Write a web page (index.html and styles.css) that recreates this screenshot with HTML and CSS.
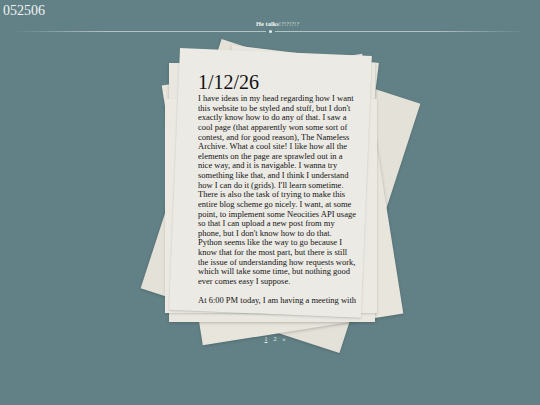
FILE: index.html
```html
<!DOCTYPE html>
<html lang="en">
<head>
<meta charset="utf-8">
<title>052506</title>
<link rel="stylesheet" href="styles.css">
</head>
<body>
<header class="top">
  <div class="site-id">052506</div>
  <div class="tagline"><b>He talks</b><span>!?!?!?!?</span></div>
  <div class="rule"><span class="dot"></span></div>
</header>
<main class="stage">
  <div class="stack">
    <div class="sheet sheet-cw"></div>
    <div class="sheet sheet-ccw"></div>
    <div class="sheet sheet-tilt"></div>
    <div class="sheet sheet-back"></div>
    <div class="sheet sheet-mid"></div>
    <div class="sheet sheet-front"></div>
    <article class="post">
      <h1 class="post-title">1/12/26</h1>
      <p>I have ideas in my head regarding how I want this website to be styled and stuff, but I don't exactly know how to do any of that. I saw a cool page (that apparently won some sort of contest, and for good reason), The Nameless Archive. What a cool site! I like how all the elements on the page are sprawled out in a nice way, and it is navigable. I wanna try something like that, and I think I understand how I can do it (grids). I'll learn sometime. There is also the task of trying to make this entire blog scheme go nicely. I want, at some point, to implement some Neocities API usage so that I can upload a new post from my phone, but I don't know how to do that. Python seems like the way to go because I know that for the most part, but there is still the issue of understanding how requests work, which will take some time, but nothing good ever comes easy I suppose.</p>
      <p>At 6:00 PM today, I am having a meeting with</p>
    </article>
  </div>
  <nav class="pager">
    <a class="page current">1</a>
    <a class="page">2</a>
    <a class="page">»</a>
  </nav>
</main>
</body>
</html>
```

FILE: styles.css
```css
html, body {
  margin: 0;
  padding: 0;
}
body {
  width: 540px;
  height: 405px;
  overflow: hidden;
  background: #628186;
  font-family: "Liberation Serif", "Times New Roman", serif;
  color: #111;
}

.top {
  padding-top: 4px;
}
.site-id {
  font-size: 14px;
  line-height: 14px;
  color: #eef3f3;
  padding-left: 3px;
}
.tagline {
  margin-top: 2px;
  font-size: 6.5px;
  line-height: 7px;
  text-align: center;
  padding-left: 15px;
  color: #dde7e7;
}
.tagline b {
  color: #f0f4f4;
}
.tagline span {
  color: #cfdcdc;
}
.rule {
  position: relative;
  height: 1px;
  margin: 4px 14px 0;
  background: linear-gradient(90deg, rgba(230,240,240,0), rgba(230,240,240,.6) 18%, rgba(230,240,240,.6) 82%, rgba(230,240,240,0));
}
.dot {
  position: absolute;
  left: 50%;
  top: -1px;
  width: 3px;
  height: 3px;
  margin-left: -1.5px;
  border-radius: 50%;
  background: #e6eeee;
  box-shadow: 0 0 0 3px #628186;
}

.stage {
  display: flex;
  flex-direction: column;
  align-items: center;
  margin-top: 13px;
}
.stack {
  position: relative;
  width: 208px;
  height: 278px;
  margin-left: 4px;
}
.sheet {
  position: absolute;
  background: #e9e7df;
  box-shadow: 0 1px 3px rgba(30,40,40,.25);
}
.sheet-cw {
  left: 8px;
  top: 20px;
  width: 209px;
  height: 262px;
  transform: rotate(18deg);
  background: #e4e2d8;
}
.sheet-ccw {
  left: 13px;
  top: 23px;
  width: 203px;
  height: 263px;
  transform: rotate(-9deg);
  background: #e7e5dc;
}
.sheet-tilt {
  left: 64px;
  top: 0;
  width: 148px;
  height: 250px;
  transform-origin: 0 0;
  transform: rotate(7deg);
  background: #e8e6de;
}
.sheet-back {
  left: 1px;
  top: 18px;
  width: 206px;
  height: 259px;
  background: #e9e7e0;
}
.sheet-mid {
  left: -3px;
  top: 54px;
  width: 212px;
  height: 214px;
  background: #ebe9e2;
  box-shadow: 0 1px 2px rgba(30,40,40,.18);
}
.sheet-front {
  left: 12px;
  top: 3px;
  width: 192px;
  height: 262px;
  transform-origin: 0 0;
  transform: rotate(2.4deg);
  background: #eceae4;
  box-shadow: 0 1px 2px rgba(30,40,40,.2);
}

.post {
  position: relative;
  z-index: 2;
  box-sizing: border-box;
  height: 263px;
  overflow: hidden;
  padding: 27px 0 0 30px;
  width: 208px;
}
.post-title {
  margin: 0 0 2px;
  font-size: 20px;
  line-height: 20px;
  font-weight: normal;
  color: #111;
}
.post p {
  width: 159px;
  margin: 0 0 9px;
  font-size: 8.5px;
  line-height: 9.63px;
  color: #141414;
}

.pager {
  position: relative;
  z-index: 3;
  display: flex;
  gap: 6px;
  margin-top: 13px;
  margin-left: 10px;
  font-size: 6px;
  line-height: 6px;
}
.page {
  color: #e8efef;
}
.page.current {
  text-decoration: underline;
}
```
